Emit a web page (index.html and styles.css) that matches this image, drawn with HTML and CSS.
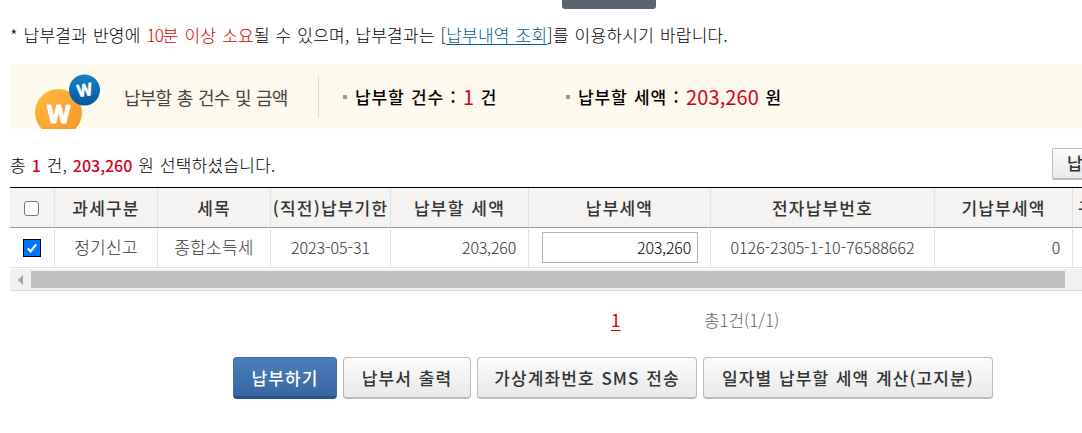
FILE: index.html
```html
<!DOCTYPE html>
<html lang="ko">
  <head>
    <meta charset="UTF-8" />
    <meta name="viewport" content="width=device-width, initial-scale=1.0" />
    <title>납부하기</title>
    <link rel="stylesheet" href="styles.css">
  </head>
  <body>
    <div class="top-btn"></div>
    <p class="notice">
      * 납부결과 반영에 <em><span class="num">10</span>분 이상 소요</em>될 수 있으며, 납부결과는 [<a href="#">납부내역 조회</a>]를 이용하시기 바랍니다.
    </p>

    <div class="banner">
      <svg class="coins" width="68" height="57" viewBox="0 0 68 57">
        <defs>
          <linearGradient id="gold" x1="0" y1="0" x2="1" y2="1">
            <stop offset="0" stop-color="#fdbb3c" />
            <stop offset="1" stop-color="#f7942a" />
          </linearGradient>
          <linearGradient id="blue" x1="0" y1="0" x2="0" y2="1">
            <stop offset="0" stop-color="#1482c8" />
            <stop offset="1" stop-color="#0a559b" />
          </linearGradient>
        </defs>
        <circle cx="24.5" cy="40.5" r="23.5" fill="url(#gold)" />
        <circle cx="50.5" cy="18" r="15.5" fill="url(#blue)" />
        <text class="coin-w" x="24.8" y="50.5" font-size="25" stroke-width="1.2" textLength="23" lengthAdjust="spacingAndGlyphs">W</text>
        <text class="coin-w" x="50.5" y="24" font-size="17" stroke-width="0.6" textLength="15" lengthAdjust="spacingAndGlyphs" transform="rotate(-10 50.5 18)">W</text>
      </svg>
      <h2>납부할 총 건수 및 금액</h2>
      <ul>
        <li class="count">납부할 건수 : <b>1</b> 건</li>
        <li>납부할 세액 : <b>203,260</b> 원</li>
      </ul>
    </div>

    <div class="summary">
      <p>총 <b>1</b> 건, <b>203,260</b> 원 선택하셨습니다.</p>
      <button class="btn small">납부</button>
    </div>

    <div class="grid">
      <table>
        <colgroup>
          <col class="w-check" />
          <col class="w-type" />
          <col class="w-item" />
          <col class="w-date" />
          <col class="w-due" />
          <col class="w-pay" />
          <col class="w-no" />
          <col class="w-paid" />
          <col class="w-last" />
        </colgroup>
        <thead>
          <tr>
            <th><span class="check"></span></th>
            <th>과세구분</th>
            <th>세목</th>
            <th>(직전)납부기한</th>
            <th>납부할 세액</th>
            <th>납부세액</th>
            <th>전자납부번호</th>
            <th>기납부세액</th>
            <th class="cut">구분</th>
          </tr>
        </thead>
        <tbody>
          <tr>
            <td>
              <span class="check on">
                <svg width="14" height="14" viewBox="0 0 14 14">
                  <path d="M2.8 7.4 5.6 10.3 11.2 3.3" fill="none" stroke="#fff" stroke-width="2.1" />
                </svg>
              </span>
            </td>
            <td>정기신고</td>
            <td>종합소득세</td>
            <td class="num">2023-05-31</td>
            <td class="num right">203,260</td>
            <td><input class="num" type="text" value="203,260" /></td>
            <td class="num">0126-2305-1-10-76588662</td>
            <td class="num right">0</td>
            <td></td>
          </tr>
        </tbody>
      </table>
      <div class="scroll">
        <span class="arrow"></span>
        <span class="thumb"></span>
      </div>
    </div>

    <div class="paging">
      <a href="#">1</a>
      <span>총1건(1/1)</span>
    </div>

    <div class="buttons">
      <button class="btn primary">납부하기</button>
      <button class="btn print">납부서 출력</button>
      <button class="btn sms">가상계좌번호 SMS 전송</button>
      <button class="btn calc">일자별 납부할 세액 계산(고지분)</button>
    </div>
  </body>
</html>
```

FILE: styles.css
```css
* {
  margin: 0;
  padding: 0;
  box-sizing: border-box;
}
html {
  overflow: hidden;
}
body {
  height: 433px;
  padding-left: 10px;
  overflow: hidden;
  background: #fff;
  color: #000;
  font-family: "Noto Sans CJK KR", sans-serif;
  font-size: 17px;
  font-weight: 300;
  letter-spacing: 0.25px;
  word-spacing: 0.8px;
  line-height: 24px;
  white-space: nowrap;
}
.top-btn {
  width: 94px;
  height: 9px;
  margin-left: 552px;
  background: #5c6370;
  border-radius: 0 0 3px 3px;
}
.num {
  letter-spacing: -0.9px;
}
.notice {
  height: 55px;
  padding-top: 14px;
}
.notice em {
  color: #d00000;
  font-style: normal;
}
.notice a {
  color: #005a96;
  text-underline-offset: 2px;
}

/* banner */
.banner {
  display: flex;
  align-items: center;
  height: 65px;
  padding-left: 24px;
  background: #fef9ed;
}
.coins {
  align-self: flex-end;
}
.coin-w {
  fill: #fff;
  stroke: #fff;
  stroke-linejoin: round;
  text-anchor: middle;
  font-family: "Open Sans", sans-serif;
  font-weight: 700;
  letter-spacing: 0;
}
.banner h2 {
  width: 195px;
  margin-left: 22px;
  border-right: 1px solid #d9d9d9;
  color: #444;
  font-size: 18px;
  font-weight: 400;
  letter-spacing: -0.8px;
  word-spacing: 1.2px;
  line-height: 42px;
}
.banner ul {
  display: flex;
  list-style: none;
  font-weight: 500;
  letter-spacing: 0.9px;
}
.banner li {
  display: flex;
  align-items: center;
  white-space: pre;
}
.banner li::before {
  content: "";
  width: 4px;
  height: 4px;
  margin: 0 8px 0 24px;
  background: #999;
}
.banner li.count {
  width: 223px;
}
.banner b {
  color: #d6001c;
  font-size: 20px;
  font-weight: 400;
  letter-spacing: 0.1px;
}

/* selected total */
.summary {
  display: flex;
  justify-content: space-between;
  height: 58px;
  padding-top: 19px;
}
.summary p {
  padding-top: 5px;
}
.summary b {
  color: #d0021b;
  font-size: 16px;
  font-weight: 500;
  letter-spacing: 0;
}

/* table */
.grid {
  overflow: hidden;
  border-top: 1px solid #000;
}
table {
  width: 1173px;
  table-layout: fixed;
  border-collapse: separate;
  border-spacing: 0;
  color: #333;
}
.w-check { width: 45px; }
.w-type { width: 103px; }
.w-item { width: 113px; }
.w-date { width: 120px; }
.w-due { width: 138px; }
.w-pay { width: 182px; }
.w-no { width: 224px; }
.w-paid { width: 138px; }
.w-last { width: 110px; }
th,
td {
  height: 40px;
  border-right: 1px solid #e2e2e2;
  text-align: center;
  vertical-align: middle;
}
th {
  background: #f5f3f2;
  border-bottom: 1px solid #999;
  color: #333;
  font-weight: 500;
  letter-spacing: 1.2px;
}
td {
  padding-bottom: 1px;
  border-bottom: 1px solid #e2e2e2;
}
td.num {
  font-size: 16px;
  letter-spacing: 0;
}
th.cut {
  padding-left: 5px;
  text-align: left;
}
td.right {
  padding-right: 12px;
  letter-spacing: -0.2px;
  text-align: right;
}
td input {
  display: block;
  width: 156px;
  height: 31px;
  margin: 1px 0 0 13px;
  padding: 0 6px 1px;
  border: 1px solid #b5b5b5;
  color: #000;
  font-family: inherit;
  font-size: 16px;
  font-weight: 300;
  text-align: right;
}
td input.num {
  letter-spacing: -0.2px;
}
.check {
  display: block;
  width: 15px;
  height: 15px;
  margin: 1px auto 0;
  background: #fff;
  border: 1px solid #767676;
  border-radius: 3px;
  position: relative;
  left: -1px;
}
.check.on {
  left: 0;
  width: 18px;
  height: 18px;
  padding: 1px;
  background: #0075ff;
  border: 1px solid #000;
  border-radius: 0;
}
.check svg {
  display: block;
}
.scroll {
  display: flex;
  align-items: center;
  height: 23px;
  border-top: 1px solid #fff;
  border-bottom: 1px solid #dcdcdc;
  background: #f1f1f1;
}
.arrow {
  margin: 0 8px;
  border: 5px solid transparent;
  border-right: 5px solid #a3a3a3;
  border-left: 0;
}
.thumb {
  width: 1034px;
  height: 17px;
  background: #c1c1c1;
}

.paging {
  display: flex;
  height: 66px;
  padding: 17px 0 0 601px;
}
.paging a {
  width: 93px;
  color: #d00000;
  font-weight: 400;
  text-underline-offset: 3px;
}
.paging span {
  color: #666;
  letter-spacing: -0.1px;
}

/* buttons */
.buttons {
  display: flex;
  gap: 6px;
  padding-left: 223px;
}
.btn {
  height: 42px;
  background: linear-gradient(#fbfbfb, #e9e9e9);
  border: 1px solid #bcbcbc;
  border-bottom: 2px solid #bbb;
  border-radius: 4px;
  color: #333;
  font-family: inherit;
  font-size: 17px;
  font-weight: 500;
  letter-spacing: 1.1px;
  word-spacing: 0.8px;
  white-space: nowrap;
}
.btn.small {
  width: 100px;
  height: 32px;
  margin-right: -70px;
  padding: 0 0 2px 14px;
  border-radius: 2px;
  text-align: left;
}
.btn.primary {
  width: 104px;
  background: linear-gradient(#4a7fbb, #3866a3);
  border: 1px solid #3c6ca9;
  border-bottom: 3px solid #29518a;
  color: #fff;
}
.btn.print {
  width: 128px;
}
.btn.sms {
  width: 220px;
}
.btn.calc {
  width: 290px;
}
```
